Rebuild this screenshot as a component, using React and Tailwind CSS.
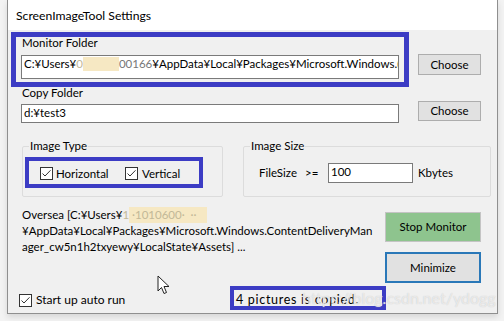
import React from 'react';

const font = { fontFamily: 'Lato, "Noto Sans", sans-serif' };

function Check({ className = '' }) {
  return (
    <svg width="13" height="13" viewBox="0 0 13 13" className={className}>
      <rect x="0.5" y="0.5" width="12" height="12" fill="#fff" stroke="#333" />
      <polyline points="2.5,6.5 5,9 10.5,3.3" fill="none" stroke="#333" strokeWidth="1" />
    </svg>
  );
}

function Blob({ w, children }) {
  return (
    <span className="inline-block bg-[#f6e8c3] text-[#c2b898] overflow-hidden align-top whitespace-nowrap" style={{ width: w }}>
      {children}
    </span>
  );
}

function Cursor() {
  return (
    <svg width="13" height="20" viewBox="0 0 13 20" className="absolute left-[157px] top-[275px]">
      <path d="M1 1 L1 16 L4.5 12.5 L7 18.5 L9.5 17.5 L7 11.5 L12 11.5 Z" fill="#fff" stroke="#222" strokeWidth="1" strokeLinejoin="round" />
    </svg>
  );
}

export default function App() {
  return (
    <div className="relative w-[504px] h-[321px] overflow-hidden bg-[#f3f3f3] text-[11.5px] text-black" style={font}>
      <div className="ml-[7px] w-[491px] h-[314px] flex flex-col border-x border-b border-[#8f8f8f] shadow-[0_3px_6px_rgba(0,0,0,0.12)]">
        <div className="h-[30px] shrink-0 bg-white flex items-center pl-[8px] text-[12.2px] leading-none pt-[2px]">
          ScreenImageTool Settings
        </div>

        <div className="flex-1 flex flex-col bg-[#f0f0f0]">
          {/* Monitor folder */}
          <div className="flex items-start pl-[13px]">
            <div className="w-[378px]">
              <p className="mt-[7px] leading-[12px] pl-[1px]">Monitor Folder</p>
              <div className="mt-[6px] h-[24px] bg-white border border-[#7a7a7a] pl-[2px] pt-[1px] leading-[14px] whitespace-nowrap overflow-hidden">
                C:¥Users¥<span className="text-[#c2b898]">0</span>
                <Blob w="36px">&nbsp;</Blob>
                <span className="text-[#777]">00166</span>¥AppData¥Local¥Packages¥Microsoft.Windows.(
              </div>
            </div>
            <button className="ml-[19px] mt-[24px] w-[63px] h-[21px] bg-[#e1e1e1] border border-[#adadad] leading-none">
              Choose
            </button>
          </div>

          {/* Copy folder */}
          <div className="flex items-start pl-[13px]">
            <div className="w-[378px]">
              <p className="mt-[8px] leading-[12px] pl-[1px]">Copy Folder</p>
              <div className="mt-[5px] h-[19px] bg-white border border-[#7a7a7a] pl-[2px] leading-[16px]">
                d:¥test3
              </div>
            </div>
            <button className="ml-[19px] mt-[22px] w-[63px] h-[20px] bg-[#e1e1e1] border border-[#adadad] leading-none">
              Choose
            </button>
          </div>

          {/* Groups */}
          <div className="flex mt-[17px] pl-[14px]">
            <fieldset className="w-[201px] h-[57px] border border-[#dcdcdc] rounded-[2px] px-[6px]">
              <legend className="px-[1px] leading-[12px]">Image Type</legend>
              <div className="flex items-center mt-[15px] ml-[11px]">
                <Check />
                <span className="ml-[3px] w-[69px] leading-[13px]">Horizontal</span>
                <Check />
                <span className="ml-[4px] leading-[13px]">Vertical</span>
              </div>
            </fieldset>
            <fieldset className="ml-[20px] w-[248px] h-[57px] border border-[#dcdcdc] rounded-[2px] px-[6px]">
              <legend className="px-[1px] leading-[12px]">Image Size</legend>
              <div className="flex items-center mt-[11px]">
                <span className="ml-[9px] w-[46px]">FileSize</span>
                <span className="w-[23px]">&gt;=</span>
                <div className="w-[85px] h-[20px] bg-white border border-[#7a7a7a] pl-[2px] leading-[16px]">100</div>
                <span className="ml-[5px]">Kbytes</span>
              </div>
            </fieldset>
          </div>

          {/* Status + buttons */}
          <div className="flex flex-1">
            <div className="w-[377px] flex flex-col">
              <div className="mt-[10px] ml-[14px] leading-[16px] whitespace-nowrap">
                <p>
                  Oversea [C:¥Users¥<span className="text-[#c2b898]">1</span>
                  <Blob w="78px">&nbsp;·1010600·&nbsp;&nbsp;··</Blob>
                </p>
                <p>¥AppData¥Local¥Packages¥Microsoft.Windows.ContentDeliveryMan</p>
                <p>ager_cw5n1h2txyewy¥LocalState¥Assets] ...</p>
              </div>
              <div className="flex-1" />
              <div className="flex items-center h-[16px] mb-[5px]">
                <div className="w-[228px] flex items-center pl-[11px]">
                  <Check />
                  <span className="ml-[4px] text-[12px]">Start up auto run</span>
                </div>
                <span className="text-[12.5px] tracking-[0.7px]">4 pictures is copied.</span>
              </div>
            </div>
            <div className="w-[96px] flex flex-col">
              <button className="mt-[15px] h-[30px] bg-[#8ec48e] border border-[#c4c4c4] leading-none">
                Stop Monitor
              </button>
              <button className="mt-[10px] h-[31px] bg-[#e1e1e1] border-2 border-[#2a78b8] leading-none">
                Minimize
              </button>
            </div>
          </div>
        </div>
      </div>

      {/* annotation frames */}
      <div className="absolute left-[11px] top-[32px] w-[398px] h-[55px] border-[5px] border-[#3c3cc4]" />
      <div className="absolute left-[25px] top-[157px] w-[178px] h-[31px] border-[4px] border-[#3c3cc4]" />
      <div className="absolute left-[230px] top-[286px] w-[156px] h-[24px] border-[4px] border-[#3c3cc4]" />

      <Cursor />

      <div className="absolute left-[302px] top-[290px] text-[16px] leading-none text-white/60 [text-shadow:0_0_1px_#c0c0c0]">
        https://blog.csdn.net/ydogg
      </div>
    </div>
  );
}
